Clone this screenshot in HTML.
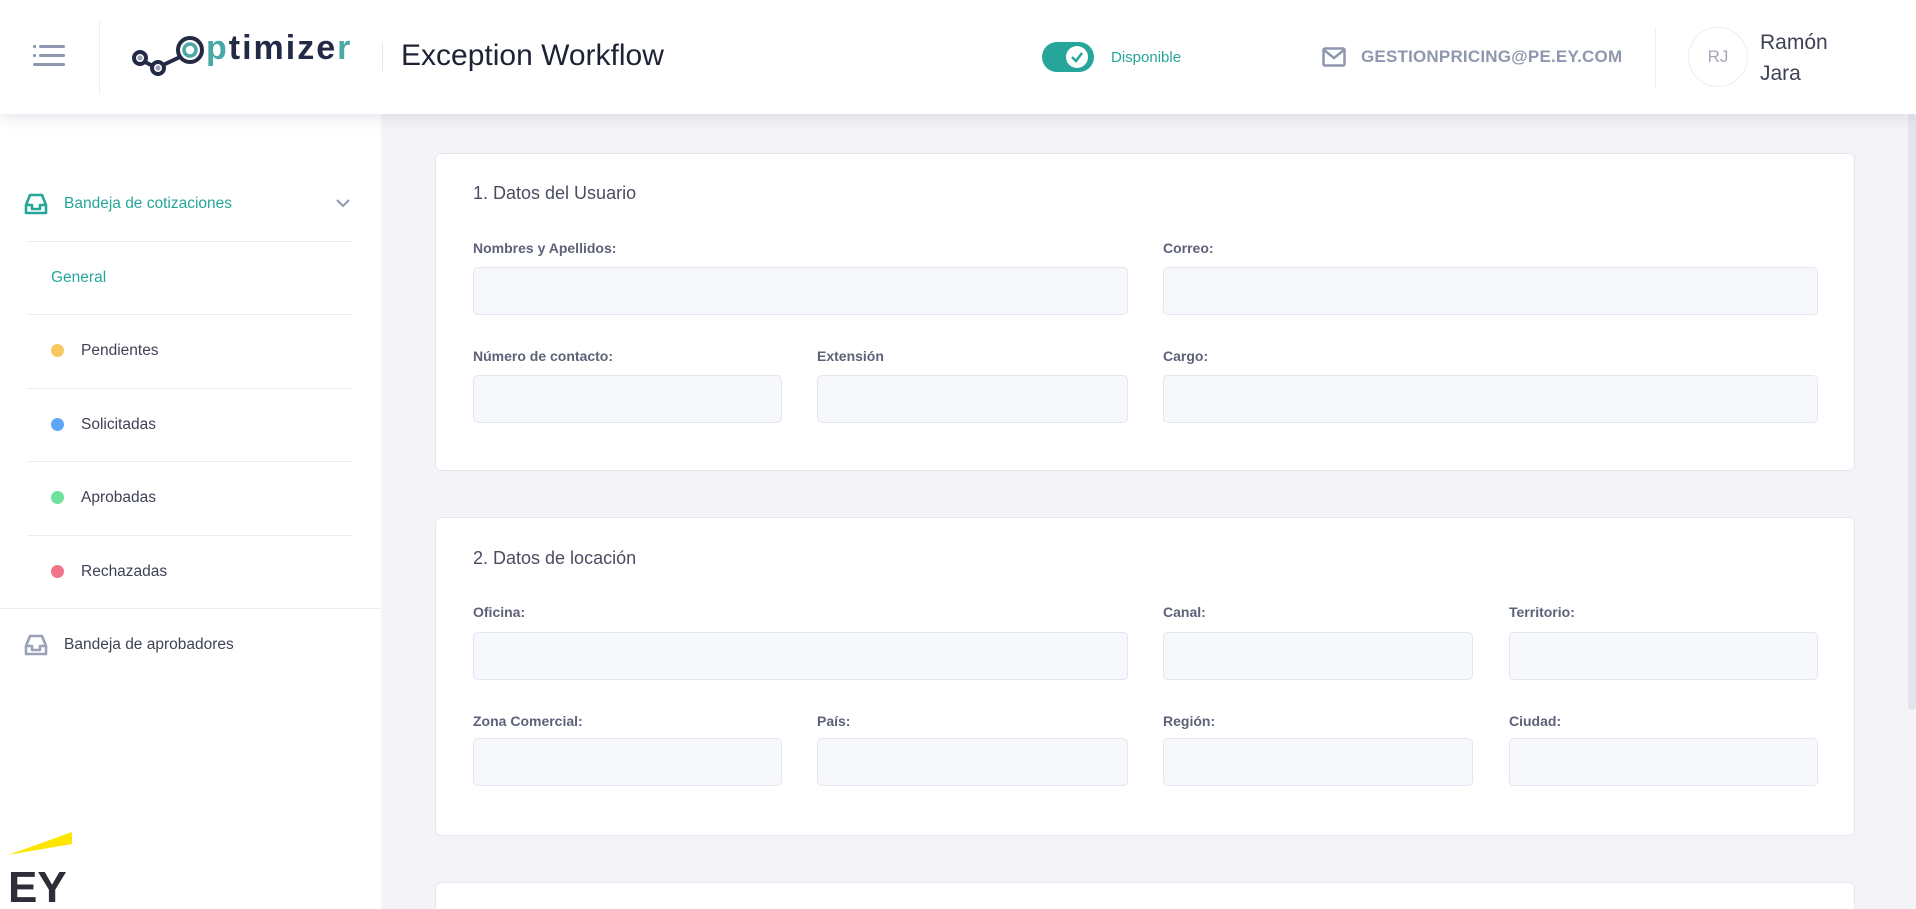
<!DOCTYPE html>
<html style="width:1916px;height:909px;overflow:hidden"><head><meta charset="utf-8"><style>
*{box-sizing:border-box;margin:0;padding:0}
body{width:1916px;height:909px;overflow:hidden;background:#f3f3f8;font-family:"Liberation Sans",sans-serif;position:relative}
.hdr{position:absolute;left:0;top:0;width:1916px;height:114px;background:#fff;box-shadow:0 4px 14px rgba(60,60,100,.12);z-index:5}
.side{position:absolute;left:0;top:114px;width:381px;height:795px;background:#fff}
.abs{position:absolute}
.sep{position:absolute;left:27px;width:325px;height:1px;background:#ebedf2}
.it{position:absolute;font-size:15.5px;color:#3f4254;line-height:18px}
.dot{position:absolute;left:51px;width:13px;height:13px;border-radius:50%}
.card{position:absolute;left:435px;width:1420px;background:#fff;border:1px solid #e6e8f0;border-radius:6px}
.t{position:absolute;left:37px;font-size:18px;color:#4a4d60}
.l{position:absolute;font-size:14px;font-weight:bold;color:#5e6278}
.i{position:absolute;height:48px;background:#f7f8fc;border:1px solid #e3e6f0;border-radius:5px}
</style></head><body>
<div class="hdr">
 <svg class="abs" style="left:33px;top:45px" width="32" height="22" viewBox="0 0 32 22"><g fill="#8e97ad"><rect x="0" y="0" width="3" height="3" rx="1"/><rect x="6" y="0" width="26" height="3" rx="1.5"/><rect x="0" y="9" width="3" height="3" rx="1"/><rect x="6" y="9" width="26" height="3" rx="1.5"/><rect x="0" y="18" width="32" height="3" rx="1.5"/></g></svg>
 <div class="abs" style="left:99px;top:21px;width:1px;height:73px;background:#ebedf2"></div>
 <svg class="abs" style="left:130px;top:32px" width="76" height="50" viewBox="0 0 76 50"><g fill="none" stroke="#232a45" stroke-width="4"><circle cx="10" cy="26" r="6"/><circle cx="28" cy="36" r="6"/><circle cx="60" cy="18" r="12"/><path d="M15 30 L23 34 M33 33 L50 25"/></g><g fill="#9aa0b8"><circle cx="10" cy="26" r="2.5"/><circle cx="28" cy="36" r="2.5"/></g><circle cx="60" cy="18" r="6" fill="none" stroke="#4aa9a6" stroke-width="3.5"/></svg>
 <div class="abs" style="left:206px;top:28px;font-size:34px;font-weight:bold;letter-spacing:2px;color:#232a45;line-height:40px"><span style="color:#4aa9a6">p</span>timize<span style="color:#4aa9a6">r</span></div>
 <div class="abs" style="left:382px;top:43px;width:1px;height:28px;background:#e3e6f0"></div>
 <div class="abs" style="left:401px;top:38px;font-size:30px;color:#1e2235;line-height:36px">Exception Workflow</div>
 <div class="abs" style="left:1042px;top:42px;width:52px;height:30px;border-radius:15px;background:#26a69a"></div>
 <div class="abs" style="left:1066px;top:46px;width:22px;height:22px;border-radius:50%;background:#fff"></div>
 <svg class="abs" style="left:1070px;top:51px" width="14" height="12" viewBox="0 0 14 12"><path d="M2 6 L6 10 L12 2" fill="none" stroke="#26a69a" stroke-width="2.5"/></svg>
 <div class="abs" style="left:1111px;top:49px;font-size:15px;color:#26a69a">Disponible</div>
 <svg class="abs" style="left:1322px;top:47px" width="24" height="20" viewBox="0 0 24 20"><rect x="1.5" y="1.5" width="21" height="17" rx="1.5" fill="none" stroke="#8e97ad" stroke-width="2.5"/><path d="M2 3 L12 11 L22 3" fill="none" stroke="#8e97ad" stroke-width="2.5"/></svg>
 <div class="abs" style="left:1361px;top:47px;font-size:17px;font-weight:bold;color:#8e97ad;letter-spacing:.2px">GESTIONPRICING@PE.EY.COM</div>
 <div class="abs" style="left:1655px;top:27px;width:1px;height:60px;background:#ebedf2"></div>
 <div class="abs" style="left:1688px;top:27px;width:60px;height:60px;border-radius:50%;border:1px solid #eceef4;text-align:center;line-height:58px;font-size:17px;color:#a3a8bd">RJ</div>
 <div class="abs" style="left:1760px;top:27px;font-size:21px;color:#3f4254;line-height:31px">Ramón<br>Jara</div>
</div>
<div class="side">
 <svg class="abs" style="left:24px;top:78px" width="24" height="24" viewBox="0 0 24 24"><path d="M2 13 L6 3 H18 L22 13 V21 H2 Z M2 13 H8 V17 H16 V13 H22" fill="none" stroke="#26a69a" stroke-width="2.6" stroke-linejoin="round"/></svg>
 <div class="it" style="left:64px;top:81px;color:#26a69a">Bandeja de cotizaciones</div>
 <svg class="abs" style="left:336px;top:85px" width="14" height="9" viewBox="0 0 14 9"><path d="M1 1 L7 7 L13 1" fill="none" stroke="#8e97ad" stroke-width="2"/></svg>
 <div class="sep" style="top:127px"></div>
 <div class="it" style="left:51px;top:155px;color:#26a69a">General</div>
 <div class="sep" style="top:200px"></div>
 <div class="dot" style="top:230px;background:#f8c85f"></div><div class="it" style="left:81px;top:228px">Pendientes</div>
 <div class="sep" style="top:274px"></div>
 <div class="dot" style="top:304px;background:#5ca7f7"></div><div class="it" style="left:81px;top:302px">Solicitadas</div>
 <div class="sep" style="top:347px"></div>
 <div class="dot" style="top:377px;background:#6ee29b"></div><div class="it" style="left:81px;top:375px">Aprobadas</div>
 <div class="sep" style="top:421px"></div>
 <div class="dot" style="top:451px;background:#ef7586"></div><div class="it" style="left:81px;top:449px">Rechazadas</div>
 <div class="abs" style="left:0;top:494px;width:381px;height:1px;background:#ebedf2"></div>
 <svg class="abs" style="left:24px;top:519px" width="24" height="24" viewBox="0 0 24 24"><path d="M2 13 L6 3 H18 L22 13 V21 H2 Z M2 13 H8 V17 H16 V13 H22" fill="none" stroke="#9aa0b5" stroke-width="2.6" stroke-linejoin="round"/></svg>
 <div class="it" style="left:64px;top:522px">Bandeja de aprobadores</div>
 <svg class="abs" style="left:8px;top:718px" width="66" height="72" viewBox="0 0 66 72"><path d="M0 23 L64 0 V12 Z" fill="#ffe600"/><text x="0" y="70" font-family="Liberation Sans" font-weight="bold" font-size="44" fill="#2e2e38">EY</text></svg>
</div>
<div class="card" style="top:153px;height:318px">
 <div class="t" style="top:29px">1. Datos del Usuario</div>
 <div class="l" style="left:37px;top:86px">Nombres y Apellidos:</div>
 <div class="l" style="left:727px;top:86px">Correo:</div>
 <div class="i" style="left:37px;top:113px;width:655px"></div>
 <div class="i" style="left:727px;top:113px;width:655px"></div>
 <div class="l" style="left:37px;top:194px">Número de contacto:</div>
 <div class="l" style="left:381px;top:194px">Extensión</div>
 <div class="l" style="left:727px;top:194px">Cargo:</div>
 <div class="i" style="left:37px;top:221px;width:309px"></div>
 <div class="i" style="left:381px;top:221px;width:311px"></div>
 <div class="i" style="left:727px;top:221px;width:655px"></div>
</div>
<div class="card" style="top:517px;height:319px">
 <div class="t" style="top:30px">2. Datos de locación</div>
 <div class="l" style="left:37px;top:86px">Oficina:</div>
 <div class="l" style="left:727px;top:86px">Canal:</div>
 <div class="l" style="left:1073px;top:86px">Territorio:</div>
 <div class="i" style="left:37px;top:114px;width:655px"></div>
 <div class="i" style="left:727px;top:114px;width:310px"></div>
 <div class="i" style="left:1073px;top:114px;width:309px"></div>
 <div class="l" style="left:37px;top:195px">Zona Comercial:</div>
 <div class="l" style="left:381px;top:195px">País:</div>
 <div class="l" style="left:727px;top:195px">Región:</div>
 <div class="l" style="left:1073px;top:195px">Ciudad:</div>
 <div class="i" style="left:37px;top:220px;width:309px"></div>
 <div class="i" style="left:381px;top:220px;width:311px"></div>
 <div class="i" style="left:727px;top:220px;width:310px"></div>
 <div class="i" style="left:1073px;top:220px;width:309px"></div>
</div>
<div class="card" style="top:882px;height:27px;border-bottom:none;border-radius:6px 6px 0 0"></div>
<div class="abs" style="left:1908px;top:114px;width:8px;height:596px;background:#e4e5ec;border-radius:4px"></div>
</body></html>
